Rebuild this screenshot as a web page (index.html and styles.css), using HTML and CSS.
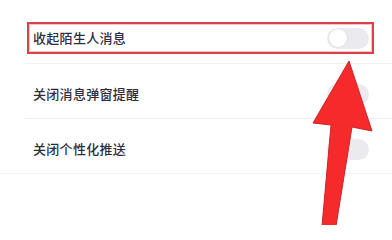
FILE: index.html
```html
<!DOCTYPE html>
<html lang="zh-CN">
<head>
<meta charset="utf-8">
<title>设置</title>
<link rel="stylesheet" href="styles.css">
</head>
<body>
<div class="page">
  <ul class="list">
    <li class="row">
      <div class="row-inner highlight">
        <span class="label">收起陌生人消息</span>
        <span class="toggle"><span class="knob"></span></span>
      </div>
    </li>
    <li class="row">
      <div class="row-inner">
        <span class="label">关闭消息弹窗提醒</span>
        <span class="toggle"><span class="knob"></span></span>
      </div>
    </li>
    <li class="row last">
      <div class="row-inner">
        <span class="label">关闭个性化推送</span>
        <span class="toggle"><span class="knob"></span></span>
      </div>
    </li>
  </ul>
  <svg class="arrow" width="392" height="225" viewBox="0 0 392 225" aria-hidden="true">
    <polygon points="349,61 372,131 352,127 336,226 322,226 331,125 313,123" fill="#f72a2b" stroke="#c9252a" stroke-width="1" stroke-linejoin="round"/>
  </svg>
</div>
</body>
</html>
```

FILE: styles.css
```css
html, body {
  margin: 0;
  padding: 0;
  background: #ffffff;
}

.page {
  position: relative;
  width: 392px;
  height: 225px;
  overflow: hidden;
  font-family: "Noto Sans CJK SC", "Noto Sans", sans-serif;
}

.list {
  list-style: none;
  margin: 0;
  padding: 8px 0 0 0;
  border-bottom: 1px solid #f3f3f5;
  width: 392px;
}

.row {
  margin-left: 25px;
  padding: 14px 0 8px 0;
  border-bottom: 1px solid #f0f0f3;
}

.row:first-child {
  padding-bottom: 9px;
}

.row.last {
  border-bottom: none;
}

.row-inner {
  display: flex;
  align-items: center;
  justify-content: space-between;
  height: 32px;
  box-sizing: border-box;
  margin-left: 2px;
  margin-right: 18px;
  padding: 0 3px 0 4px;
  border: 2px solid transparent;
}

.row-inner.highlight {
  border-color: #d8434b;
  box-shadow: inset 0 0 0 1px #f6c3c5;
}

.label {
  font-size: 13px;
  line-height: 16px;
  font-weight: 500;
  color: #312c3d;
  letter-spacing: 0.3px;
}

.toggle {
  display: flex;
  align-items: center;
  width: 42px;
  height: 21px;
  border-radius: 11px;
  background: #ebebef;
  padding: 0 2px;
  box-sizing: border-box;
}

.knob {
  width: 18px;
  height: 18px;
  border-radius: 50%;
  background: #ffffff;
  box-shadow: 0 0 2px rgba(0, 0, 0, 0.12);
}

.arrow {
  position: absolute;
  left: 0;
  top: 0;
  pointer-events: none;
}
```
